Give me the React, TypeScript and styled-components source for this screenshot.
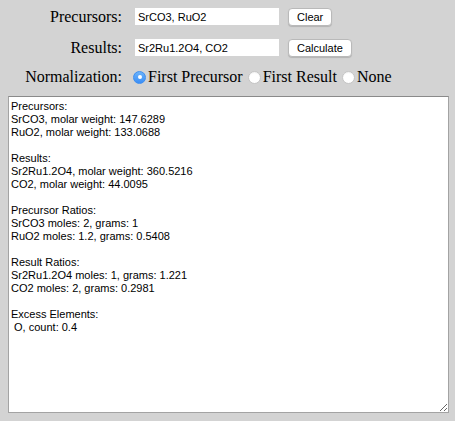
import React, { useState } from "react";
import styled, { createGlobalStyle } from "styled-components";

const Global = createGlobalStyle`
  html, body { margin: 0; padding: 0; background: #d3d3d3; }
  body { font-family: "Liberation Serif", "Times New Roman", serif; }
`;

const Page = styled.div`
  width: 455px;
  height: 421px;
  box-sizing: border-box;
  padding: 8px 7px 0 8px;
  display: flex;
  flex-direction: column;
`;

const Row = styled.div<{ $mt?: number; $h?: number }>`
  display: flex;
  align-items: center;
  height: ${(p) => p.$h ?? 17}px;
  margin-top: ${(p) => p.$mt ?? 0}px;
`;

const Label = styled.label<{ $gap?: number }>`
  width: 114px;
  text-align: right;
  font-size: 16px;
  color: #000;
  margin-right: ${(p) => p.$gap ?? 13}px;
  white-space: nowrap;
`;

const TextInput = styled.input`
  box-sizing: border-box;
  width: 144px;
  height: 17px;
  border: none;
  outline: none;
  background: #fff;
  padding: 0 3px;
  font-family: "Liberation Sans", Arial, sans-serif;
  font-size: 11px;
  color: #000;
`;

const Button = styled.button`
  box-sizing: border-box;
  margin-left: 9px;
  height: 18px;
  padding: 0 8px;
  background: #fff;
  border: 1px solid #b9b9b9;
  border-radius: 4px;
  box-shadow: 0 1px 1px rgba(0, 0, 0, 0.15);
  font-family: "Liberation Sans", Arial, sans-serif;
  font-size: 11px;
  color: #000;
  line-height: 16px;
`;

const Radio = styled.span<{ $on: boolean }>`
  box-sizing: border-box;
  width: 13px;
  height: 13px;
  border-radius: 50%;
  flex: none;
  display: flex;
  align-items: center;
  justify-content: center;
  margin-left: ${(p) => (p.$on ? 0 : 5)}px;
  margin-right: 2px;
  background: ${(p) => (p.$on ? "linear-gradient(#6cb3fa, #3a8ef7)" : "#fff")};
  border: 1px solid ${(p) => (p.$on ? "#3d8ef0" : "#c4c4c4")};
  box-shadow: ${(p) => (p.$on ? "none" : "inset 0 1px 1px rgba(0,0,0,0.06)")};
  &::after {
    content: "";
    display: ${(p) => (p.$on ? "block" : "none")};
    width: 4px;
    height: 4px;
    border-radius: 50%;
    background: #fff;
  }
`;

const Option = styled.span`
  display: flex;
  align-items: center;
  font-size: 16px;
  color: #000;
  cursor: default;
`;

const Output = styled.textarea`
  box-sizing: border-box;
  margin-top: 9px;
  width: 441px;
  height: 317px;
  resize: both;
  background: #fff;
  border: 1px solid #a3a3a3;
  border-top-color: #8a8a8a;
  outline: none;
  padding: 3px 2px 2px;
  font-family: "Liberation Sans", Arial, sans-serif;
  font-size: 11px;
  line-height: 13px;
  color: #000;
`;

const text = `Precursors:
SrCO3, molar weight: 147.6289
RuO2, molar weight: 133.0688

Results:
Sr2Ru1.2O4, molar weight: 360.5216
CO2, molar weight: 44.0095

Precursor Ratios:
SrCO3 moles: 2, grams: 1
RuO2 moles: 1.2, grams: 0.5408

Result Ratios:
Sr2Ru1.2O4 moles: 1, grams: 1.221
CO2 moles: 2, grams: 0.2981

Excess Elements:
 O, count: 0.4`;

export default function App() {
  const [norm, setNorm] = useState("precursor");
  const opts = [
    { k: "precursor", t: "First Precursor" },
    { k: "result", t: "First Result" },
    { k: "none", t: "None" },
  ];
  return (
    <>
      <Global />
      <Page>
        <Row>
          <Label>Precursors:</Label>
          <TextInput defaultValue="SrCO3, RuO2" />
          <Button>Clear</Button>
        </Row>
        <Row $mt={14}>
          <Label>Results:</Label>
          <TextInput defaultValue="Sr2Ru1.2O4, CO2" />
          <Button>Calculate</Button>
        </Row>
        <Row $mt={11} $h={20}>
          <Label $gap={11}>Normalization:</Label>
          {opts.map((o) => (
            <Option key={o.k} onClick={() => setNorm(o.k)}>
              <Radio $on={norm === o.k} />
              {o.t}
            </Option>
          ))}
        </Row>
        <Output defaultValue={text} spellCheck={false} />
      </Page>
    </>
  );
}
